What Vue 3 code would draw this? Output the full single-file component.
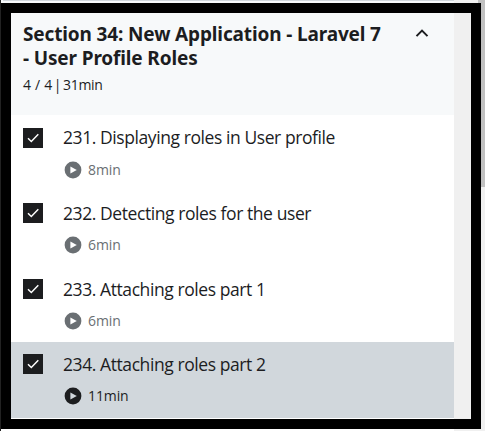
<script setup>
const lectures = [
  { title: '231. Displaying roles in User profile', time: '8min', id: 'a' },
  { title: '232. Detecting roles for the user', time: '6min', id: 'b' },
  { title: '233. Attaching roles part 1', time: '6min', id: 'c' },
  { title: '234. Attaching roles part 2', time: '11min', id: 'd', current: true },
]
</script>

<template>
  <div class="page">
    <div class="edge"></div>
    <div class="main">
      <div class="strip"><div class="rule"></div></div>
      <div class="frame">
        <div class="panel">
          <header class="head">
            <div class="heading">
              <div class="title">Section 34: New Application - Laravel 7</div>
              <div class="title">- User Profile Roles</div>
              <div class="meta"><span class="count">4 / 4</span><span class="bar"> | </span>31min</div>
            </div>
            <svg class="chevron" width="14" height="10" viewBox="0 0 14 10">
              <path d="M1.5 8.1 7 2.6l5.5 5.5" fill="none" stroke="#1c1d1f" stroke-width="2" />
            </svg>
          </header>
          <div v-for="l in lectures" :key="l.id" class="row" :class="[l.id, { current: l.current }]">
            <svg class="check" width="20" height="20" viewBox="0 0 20 20">
              <rect width="20" height="20" fill="#1c1d1f" />
              <path d="M5 10.2 8.3 13.5 15.3 6.3" fill="none" stroke="#fff" stroke-width="1.5" />
            </svg>
            <div class="body">
              <div class="name">{{ l.title }}</div>
              <div class="time">
                <svg width="18" height="18" viewBox="0 0 18 18">
                  <circle cx="9" cy="9" r="8.4" fill="currentColor" />
                  <path class="tri" d="M6.4 5.6v6.8L12.8 9z" />
                </svg>
                <span>{{ l.time }}</span>
              </div>
            </div>
          </div>
        </div>
        <div class="gutter"></div>
      </div>
      <div class="foot"></div>
    </div>
    <div class="scroll"><div class="thumb"></div></div>
  </div>
</template>

<style>
body { margin: 0; overflow: hidden; }
</style>

<style scoped>
.page { display: flex; width: 485px; height: 431px; background: #f0f0f0; font-family: "Open Sans", "Noto Sans", sans-serif; color: #1c1d1f; white-space: nowrap; font-weight: 400; }
.edge { width: 1px; background: #222; }
.main { width: 480px; display: flex; flex-direction: column; }
.strip { height: 3px; background: linear-gradient(90deg, #f7f9fa 453px, #f0f0f0 453px, #f0f0f0 477px, #c1c1c1 477px); }
.rule { height: 1px; width: 451px; margin-left: 2px; background: #d1d7dc; }
.frame { box-sizing: border-box; height: 426px; border: 10px solid #000; display: flex; }
.panel { width: 443px; height: 406px; background: #fff; }
.gutter { flex: 1; background: #f0f0f0; }
.foot { height: 2px; background: linear-gradient(90deg, #fff 453px, #f0f0f0 453px); }
.scroll { width: 4px; background: #f0f0f0; }
.thumb { height: 187px; background: #c1c1c1; }
.head { box-sizing: border-box; height: 102px; padding: 9px 25px 0 12px; background: #f7f9fa; display: flex; justify-content: space-between; }
.title { height: 24px; line-height: 24px; font-family: "Noto Sans", sans-serif; font-size: 19px; font-weight: 700; letter-spacing: -0.14px; }
.meta { line-height: 20px; margin-top: 5px; font-size: 14px; letter-spacing: -0.3px; }
.count { word-spacing: 1px; }
.bar { word-spacing: -1.5px; }
.chevron { margin-top: 6px; flex: none; }
.row { box-sizing: border-box; height: 76px; padding: 13px 12px 0; display: flex; gap: 20px; }
.row.a { height: 75px; }
.row.current { padding-top: 12px; }
.check { flex: none; }
.name { line-height: 24px; margin-top: -2px; font-size: 17.5px; letter-spacing: -0.42px; }
.a .name { margin: -3px 0 1px; }
.time { height: 20px; margin: 10px 0 0 1px; display: flex; align-items: center; gap: 6px; font-size: 14px; line-height: 20px; letter-spacing: -0.1px; color: #6a6f73; }
.a .time { margin-top: 11px; }
.current { background: #d1d7dc; }
.current .time { color: #1c1d1f; }
.tri { fill: #fff; }
.current .tri { fill: #d1d7dc; }
</style>
